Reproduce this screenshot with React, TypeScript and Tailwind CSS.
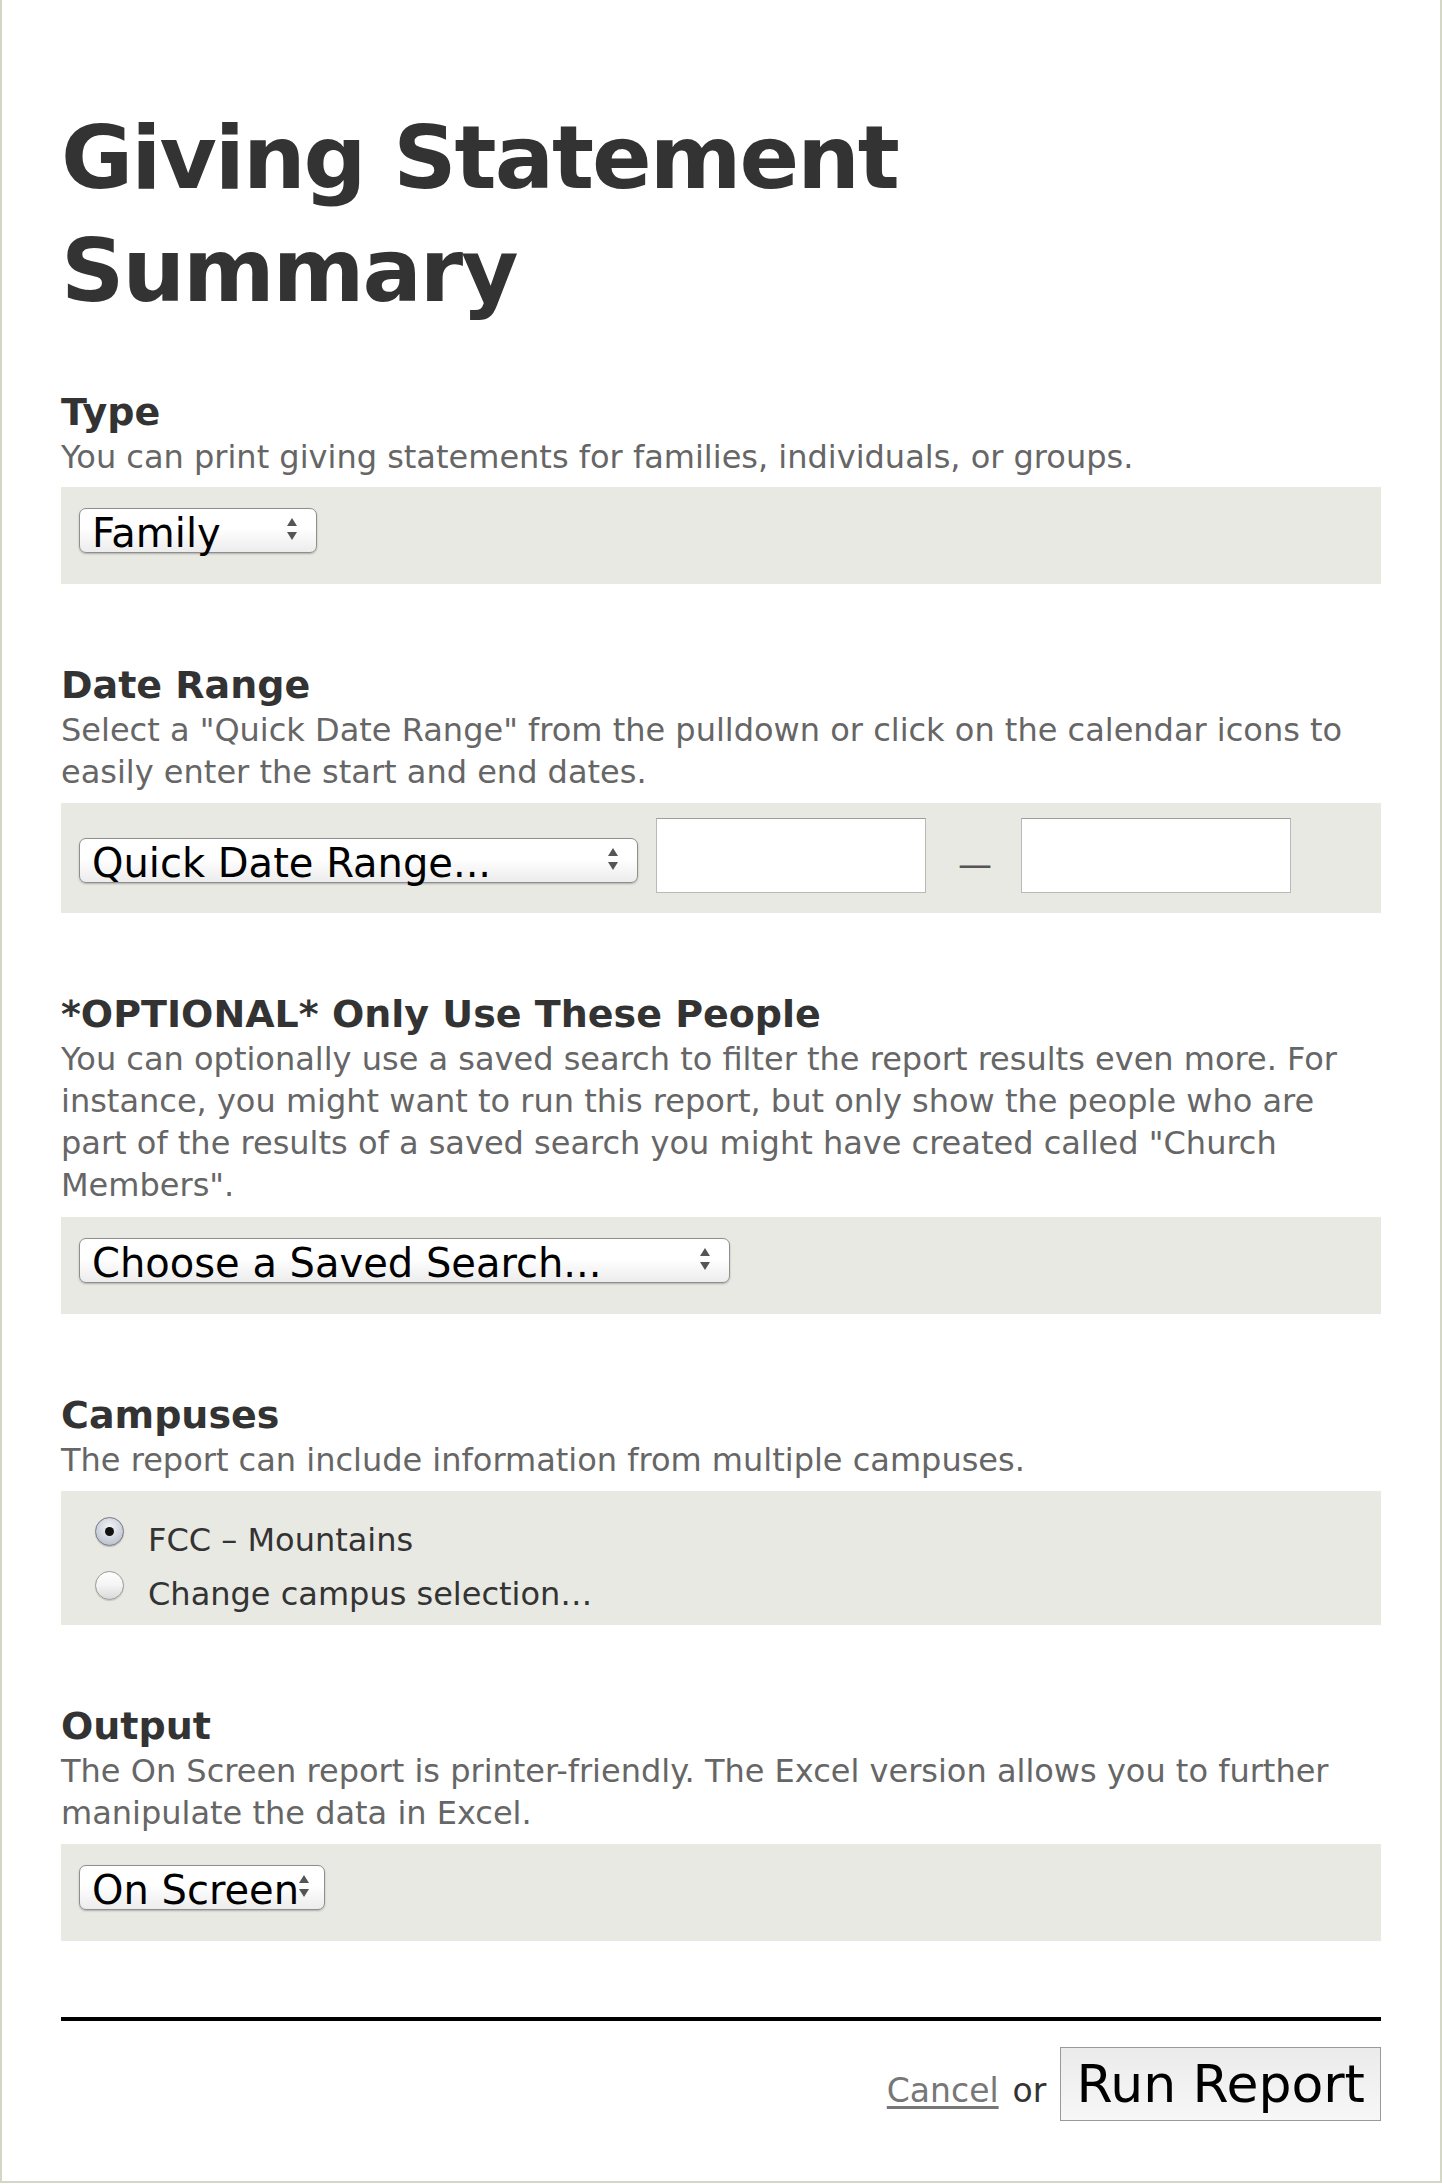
import React from "react";

// Two stacked triangles of a native-looking popup button
const Arrows = () => (
  <svg width="10" height="22" viewBox="0 0 10 22" className="mt-[9px] shrink-0">
    <path d="M5 0 L10 8 L0 8 Z" fill="#555" />
    <path d="M0 14 L10 14 L5 22 Z" fill="#555" />
  </svg>
);

function PopupSelect({ label, width }: { label: string; width: string }) {
  return (
    <div
      className={`flex h-[45px] shrink-0 items-start justify-between rounded-[7px] border border-[#8f8f8f] bg-[linear-gradient(#ffffff,#ffffff_45%,#ececec)] pl-[12px] pr-[19px] shadow-[0_1px_2px_rgba(0,0,0,0.25)] ${width}`}
    >
      <span className="whitespace-nowrap text-[40px] leading-[49px] text-black">{label}</span>
      <Arrows />
    </div>
  );
}

function Radio({ checked }: { checked?: boolean }) {
  return checked ? (
    <span className="mt-[4px] flex h-[29px] w-[29px] shrink-0 items-center justify-center rounded-full border border-[#737884] bg-[radial-gradient(circle_at_50%_35%,#f4f5f8,#c3c8d3_70%,#a5acb9)] shadow-[0_1px_1px_rgba(0,0,0,0.2)]">
      <span className="h-[9px] w-[9px] rounded-full bg-[#111]" />
    </span>
  ) : (
    <span className="mt-[4px] h-[29px] w-[29px] shrink-0 rounded-full border border-[#999] bg-[linear-gradient(#ffffff,#f4f4f4_50%,#d9d9d9)] shadow-[0_1px_1px_rgba(0,0,0,0.15)]" />
  );
}

function Section({
  title,
  desc,
  className,
  children,
}: {
  title: string;
  desc: string;
  className: string;
  children: React.ReactNode;
}) {
  return (
    <section className={className}>
      <h2 className="text-[38px] font-bold leading-[48px] text-[#333]">{title}</h2>
      <p className="text-[32px] leading-[42px] text-[#666]">{desc}</p>
      {children}
    </section>
  );
}

export default function App() {
  return (
    <div className="min-h-[2184px] bg-white font-['DejaVu_Sans',sans-serif]">
      <div className="border-x-2 border-b-2 border-[#d4d7c6] px-[59px] pt-[101px] pb-[60px]">
        <h1 className="text-[88px] font-bold leading-[113px] tracking-[-2px] text-[#333]">
          Giving Statement Summary
        </h1>

        <Section
          className="mt-[61px]"
          title="Type"
          desc="You can print giving statements for families, individuals, or groups."
        >
          <div className="mt-[9px] bg-[#e8e9e3] pl-[18px] pt-[21px] pb-[31px]">
            <PopupSelect label="Family" width="w-[238px]" />
          </div>
        </Section>

        <Section
          className="mt-[77px]"
          title="Date Range"
          desc={'Select a "Quick Date Range" from the pulldown or click on the calendar icons to easily enter the start and end dates.'}
        >
          <div className="mt-[10px] flex items-start bg-[#e8e9e3] pl-[18px] pt-[15px] pb-[20px]">
            <div className="mt-[20px]">
              <PopupSelect label="Quick Date Range..." width="w-[559px]" />
            </div>
            <div className="ml-[18px] h-[75px] w-[270px] border border-[#b9b9b9] border-t-[#9d9d9d] bg-white" />
            <span className="ml-[32px] mr-[29px] mt-[29px] text-[34px] leading-[34px] text-[#555]">—</span>
            <div className="h-[75px] w-[270px] border border-[#b9b9b9] border-t-[#9d9d9d] bg-white" />
          </div>
        </Section>

        <Section
          className="mt-[77px]"
          title="*OPTIONAL* Only Use These People"
          desc={'You can optionally use a saved search to filter the report results even more. For instance, you might want to run this report, but only show the people who are part of the results of a saved search you might have created called "Church Members".'}
        >
          <div className="mt-[11px] bg-[#e8e9e3] pl-[18px] pt-[21px] pb-[31px]">
            <PopupSelect label="Choose a Saved Search..." width="w-[651px]" />
          </div>
        </Section>

        <Section
          className="mt-[77px]"
          title="Campuses"
          desc="The report can include information from multiple campuses."
        >
          <div className="mt-[10px] bg-[#e8e9e3] pl-[34px] pt-[22px] pb-[4px]">
            <div className="flex h-[54px] items-start">
              <Radio checked />
              <span className="ml-[24px] text-[32px] leading-[54px] text-[#333]">FCC – Mountains</span>
            </div>
            <div className="flex h-[54px] items-start">
              <Radio />
              <span className="ml-[24px] text-[32px] leading-[54px] text-[#333]">Change campus selection…</span>
            </div>
          </div>
        </Section>

        <Section
          className="mt-[77px]"
          title="Output"
          desc="The On Screen report is printer-friendly. The Excel version allows you to further manipulate the data in Excel."
        >
          <div className="mt-[10px] bg-[#e8e9e3] pl-[18px] pt-[21px] pb-[31px]">
            <PopupSelect label="On Screen" width="w-[246px]" />
          </div>
        </Section>

        <div className="mt-[76px] h-[4px] bg-black" />

        <div className="mt-[26px] flex items-baseline justify-end">
          <a href="#" className="text-[33px] text-[#777] underline underline-offset-[4px]">
            Cancel
          </a>
          <span className="ml-[14px] text-[33px] text-[#333]">or</span>
          <button
            type="button"
            className="ml-[14px] h-[74px] border border-[#9a9a9a] bg-[linear-gradient(#ebebeb,#f7f7f7)] px-[15px] text-[52px] leading-[72px] text-black"
          >
            Run Report
          </button>
        </div>
      </div>
    </div>
  );
}
